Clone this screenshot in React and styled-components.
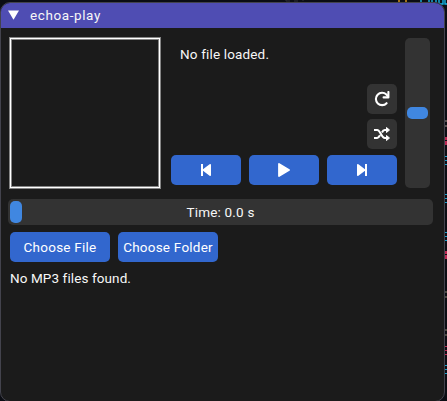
import React from "react";
import styled, { createGlobalStyle } from "styled-components";

const Global = createGlobalStyle`
  *, *::before { box-sizing: border-box; }
  body { margin: 0; background: #0b0e14; overflow: hidden; }
`;

const Desktop = styled.main`
  position: relative;
  width: 447px;
  height: 401px;
  padding-top: 2px;
  overflow: hidden;
  background: #0b0d13;
  color: #f7f7f7;
  font: 13.5px/16px Roboto, "Open Sans", sans-serif;
`;

const Backdrop = styled.svg`
  position: absolute;
  inset: 0;
  width: 447px;
  height: 401px;
`;

const Window = styled.section`
  position: relative;
  width: 445px;
  height: 400px;
  border: 1px solid #43434d;
  border-radius: 10px;
  background: #1b1b1b;
  overflow: hidden;
`;

const TitleBar = styled.header`
  display: flex;
  align-items: center;
  gap: 11px;
  height: 25px;
  padding: 0 0 1px 7px;
  background: #4f4db3;
`;

const Content = styled.div`
  display: flex;
  flex-direction: column;
  padding: 9px 11px 0 7px;
`;

const Player = styled.div`
  display: flex;
  height: 152px;
  padding-left: 1px;
`;

const Artwork = styled.div`
  width: 152px;
  height: 152px;
  border: 1px solid #858585;
  padding: 1px;
  background: #fff;
  &::before {
    content: "";
    display: block;
    height: 100%;
    border: 1px solid #858585;
    background: #1b1b1b;
  }
`;

const Panel = styled.div`
  display: flex;
  flex-direction: column;
  width: 226px;
  margin-left: 10px;
`;

const Status = styled.div`
  height: 38px;
  margin: 9px 0 0 9px;
`;

const Modes = styled.div`
  display: flex;
  flex-direction: column;
  align-items: flex-end;
  gap: 5px;
`;

const Row = styled.div`
  display: flex;
  gap: 8px;
  margin: ${(p) => p.$margin};
`;

const Button = styled.button`
  display: flex;
  align-items: center;
  justify-content: center;
  width: ${(p) => p.$width}px;
  height: 30px;
  padding: 0;
  border: 0;
  border-radius: 5px;
  background: ${(p) => (p.$muted ? "#333" : "#3267ce")};
  color: #fff;
  font: inherit;
`;

const Volume = styled.div`
  display: flex;
  align-items: center;
  justify-content: center;
  width: 25px;
  height: 150px;
  margin: 1px 0 0 8px;
  border-radius: 5px;
  background: #333;
`;

const Thumb = styled.div`
  width: ${(p) => p.$width}px;
  height: ${(p) => p.$height}px;
  border-radius: 5px;
  background: #4087e1;
`;

const Seek = styled.div`
  display: grid;
  grid-template-columns: 12px 1fr 12px;
  align-items: center;
  width: 425px;
  height: 26px;
  margin-top: 10px;
  padding: 0 2px;
  border-radius: 5px;
  background: #333;
  text-align: center;
`;

const Label = styled.span`
  white-space: pre;
  letter-spacing: ${(p) => p.$tracking || 0}px;
`;

const Empty = styled.div`
  margin: 8px 0 0 2px;
`;

const Icon = styled.svg`
  display: block;
  flex: none;
`;

const edgeMarks = [
  [120, 2, "#57514f"], [125, 2, "#57514f"],
  [137, 3, "#bd2853"], [141, 4, "#bd2853"],
  [156, 1, "#159fca"], [160, 1, "#159fca"], [164, 1, "#159fca"],
  [194, 1, "#159fca"], [198, 1, "#159fca"], [202, 1, "#159fca"],
  [232, 1, "#159fca"], [236, 1, "#159fca"], [240, 1, "#159fca"],
  [251, 3, "#bd2853"], [255, 4, "#bd2853"],
  [291, 2, "#494840"], [296, 2, "#494840"],
  [329, 2, "#494840"], [334, 2, "#494840"],
  [346, 1, "#bd2853"], [350, 1, "#bd2853"], [354, 1, "#bd2853"],
  [365, 1, "#159fca"], [369, 1, "#159fca"], [373, 1, "#159fca"],
];

export default function App() {
  return (
    <>
      <Global />
      <Desktop>
        <Backdrop viewBox="0 0 447 401">
          <path d="M286 0v1h4M294 1h4M303 0v1" stroke="#303139" fill="none" />
          <path d="M399 0v2M406 0v2" stroke="#d8931b" strokeWidth="1.5" />
          <path d="M421 0v2M429 0v3M432 0v3M436 0v3M439 0v4h4V0M445 0v4h2" stroke="#16b4e4" strokeWidth="1.4" fill="none" />
          {edgeMarks.map(([y, h, color]) => (
            <rect key={y} x="445" y={y} width="2" height={h} fill={color} />
          ))}
        </Backdrop>
        <Window>
          <TitleBar>
            <Icon width="11" height="10" viewBox="0 0 11 10"><path d="M0 .5h11L5.5 9.7z" fill="#fff" /></Icon>
            <Label $tracking={0.6}>echoa-play</Label>
          </TitleBar>
          <Content>
            <Player>
              <Artwork />
              <Panel>
                <Status><Label $tracking={0.16}>No file loaded.</Label></Status>
                <Modes>
                  <Button $width={30} $muted aria-label="Repeat">
                    <Icon width="16" height="16" viewBox="0 0 16 16" fill="none" stroke="#fff" strokeWidth="2.1">
                      <path d="M12.6 12.2A6.2 6.2 0 1 1 12.4 3.5L14 5.4" strokeLinecap="round" />
                      <path d="M14.4 1v5.4H9.6" strokeLinejoin="round" strokeLinecap="round" />
                    </Icon>
                  </Button>
                  <Button $width={30} $muted aria-label="Shuffle">
                    <Icon width="16" height="16" viewBox="0 0 16 16" fill="none" stroke="#fff" strokeWidth="2.1">
                      <path d="M0 4h3.2c3 0 4.2 8 7.5 8H13M0 12h3.2c1.2 0 2-1.2 2.8-2.7M8 6.5C8.7 5 9.5 4 10.7 4H13" />
                      <path d="M12.5 1.5L15.5 4l-3 2.5zM12.5 9.5l3 2.5-3 2.5z" fill="#fff" strokeWidth="1" strokeLinejoin="round" />
                    </Icon>
                  </Button>
                </Modes>
                <Row $margin="6px 0 0">
                  <Button $width={70} aria-label="Previous">
                    <Icon width="10" height="12" viewBox="0 0 10 12" fill="#fff"><path d="M0 0h2v12H0zM2 5.3L8.6.2Q10-.4 10 1v10q0 1.4-1.4.8L2 6.7z" /></Icon>
                  </Button>
                  <Button $width={70} aria-label="Play">
                    <Icon width="12" height="14" viewBox="0 0 12 14"><path d="M1 1l10 6-10 6z" fill="#fff" stroke="#fff" strokeWidth="1.8" strokeLinejoin="round" /></Icon>
                  </Button>
                  <Button $width={70} aria-label="Next">
                    <Icon width="10" height="12" viewBox="0 0 10 12" fill="#fff"><path d="M8 0h2v12H8zM8 5.3L1.4.2Q0-.4 0 1v10q0 1.4 1.4.8L8 6.7z" /></Icon>
                  </Button>
                </Row>
              </Panel>
              <Volume><Thumb $width={21} $height={12} /></Volume>
            </Player>
            <Seek>
              <Thumb $width={12} $height={22} />
              <Label $tracking={0.2}>Time: 0.0 s</Label>
            </Seek>
            <Row $margin="7px 0 0 2px">
              <Button $width={100}><Label $tracking={0.23}>Choose File</Label></Button>
              <Button $width={100}><Label $tracking={0.23}>Choose Folder</Label></Button>
            </Row>
            <Empty><Label $tracking={0.1}>No MP3 files found.</Label></Empty>
          </Content>
        </Window>
      </Desktop>
    </>
  );
}
